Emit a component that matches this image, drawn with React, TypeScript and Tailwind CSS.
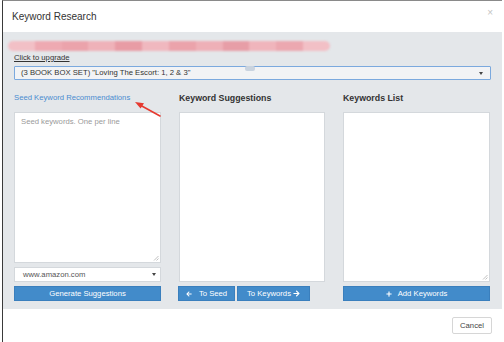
import { FaArrowLeft, FaArrowRight, FaPlus } from "react-icons/fa";

function Caret() {
  return <span className="w-0 h-0 border-x-[2.5px] border-t-[3px] border-x-transparent border-t-[#444]" />;
}

function Grip() {
  return (
    <svg className="absolute right-[1px] bottom-[1px]" width="6" height="6" viewBox="0 0 6 6">
      <path d="M5.5 1L1 5.5M5.5 3.5L3.5 5.5" stroke="#b0b0b0" strokeWidth="0.8" />
    </svg>
  );
}

// blurred redaction strip over the account line
function Redacted() {
  const shades = ["#f2c0c6", "#eeaab2", "#eba3ab", "#efb2b9", "#e89ca5", "#f0b8bf", "#eba3ab", "#eeb0b7", "#e79ea7", "#f0b5bc", "#eca8b0", "#f2c0c6"];
  return (
    <div className="ml-[-6px] mt-[8px] h-[12px] w-[322px] flex items-center">
      <div className="w-full h-[10px] rounded-full overflow-hidden flex blur-[1px]">
        {shades.map((c, i) => (
          <div key={i} className="flex-1 h-full" style={{ background: c }} />
        ))}
      </div>
    </div>
  );
}

export default function App() {
  return (
    <div className="w-[504px] h-[342px] bg-white overflow-hidden font-['Liberation_Sans',Arial,sans-serif]">
      <div className="relative ml-[2px] w-[500px] h-full border-l border-l-[#3a3a3a] border-t border-t-[#8a8a8a] flex flex-col">
        {/* header */}
        <div className="h-[31px] flex items-center justify-between pl-[9px] pr-[9px]">
          <span className="text-[10px] text-[#333]">Keyword Research</span>
          <span className="text-[10px] leading-none text-[#c4c4c4] -mt-[8px]">×</span>
        </div>

        {/* body */}
        <div className="relative h-[277px] bg-[#e4e7ea] pl-[11px] pr-[11px] flex flex-col">
          <Redacted />
          <div className="h-[12px] leading-[12px] text-[7.7px] text-[#333] underline">Click to upgrade</div>
          <div className="mt-[2px] h-[14px] border border-[#7ba9de] bg-[#f2f3f5] rounded-[1px] flex items-center justify-between pl-[6px] pr-[7px]">
            <span className="text-[7.7px] text-[#333]">(3 BOOK BOX SET) "Loving The Escort: 1, 2 &amp; 3"</span>
            <Caret />
          </div>
          <div className="absolute left-[242px] top-[34px] w-[10px] h-[5px] rounded-[2px] bg-[#c9d3df]" />

          <div className="mt-[11px] grid grid-cols-[147px_146px_147px] gap-x-[18px]">
            {/* seed column */}
            <div className="flex flex-col">
              <div className="h-[14px] leading-[14px] text-[7.7px] text-[#4a8cd0]">Seed Keyword Recommendations</div>
              <div className="relative mt-[7px] h-[151px] bg-white border border-[#d4d8dc]">
                <div className="pl-[6px] pt-[3px] text-[7.7px] text-[#9a9a9a]">Seed keywords. One per line</div>
                <Grip />
              </div>
              <div className="mt-[4px] h-[15px] bg-white border border-[#d4d8dc] flex items-center justify-between pl-[8px] pr-[4px]">
                <span className="text-[7.7px] text-[#555]">www.amazon.com</span>
                <Caret />
              </div>
              <div className="mt-[4px] h-[15px] bg-[#428bca] border border-[#3a7fbd] flex items-center justify-center text-[7.7px] text-white">
                Generate Suggestions
              </div>
            </div>

            {/* suggestions column */}
            <div className="flex flex-col">
              <div className="h-[14px] leading-[14px] text-[8.8px] font-bold text-[#333]">Keyword Suggestions</div>
              <div className="mt-[7px] h-[170px] bg-white border border-[#d4d8dc]" />
              <div className="mt-[4px] flex gap-[2px] -ml-[1px]">
                <div className="w-[57px] h-[15px] bg-[#428bca] border border-[#3a7fbd] flex items-center justify-center gap-[7px] text-[7.7px] text-white">
                  <FaArrowLeft className="w-[6px] h-[6px]" />
                  <span>To Seed</span>
                </div>
                <div className="w-[73px] h-[15px] bg-[#428bca] border border-[#3a7fbd] flex items-center justify-center gap-[2px] text-[7.7px] text-white">
                  <span>To Keywords</span>
                  <FaArrowRight className="w-[7px] h-[7px]" />
                </div>
              </div>
            </div>

            {/* keywords list column */}
            <div className="flex flex-col">
              <div className="h-[14px] leading-[14px] text-[8.8px] font-bold text-[#333]">Keywords List</div>
              <div className="relative mt-[7px] h-[170px] bg-white border border-[#d4d8dc]">
                <Grip />
              </div>
              <div className="mt-[4px] h-[15px] bg-[#428bca] border border-[#3a7fbd] flex items-center justify-center gap-[6px] text-[7.7px] text-white">
                <FaPlus className="w-[6px] h-[6px]" />
                <span>Add Keywords</span>
              </div>
            </div>
          </div>

          {/* red annotation arrow */}
          <svg className="absolute left-[128px] top-[66px]" width="34" height="22" viewBox="0 0 34 22">
            <path d="M29 18L9 7" stroke="#e63a30" strokeWidth="1.6" strokeLinecap="round" />
            <path d="M4 4L13 5.2L9.6 10.6Z" fill="#e63a30" />
          </svg>
        </div>

        {/* footer */}
        <div className="flex-1 flex justify-end items-start pt-[8px] pr-[10px]">
          <div className="w-[40px] h-[17px] bg-white border border-[#d6d6d6] rounded-[2px] flex items-center justify-center text-[7.7px] text-[#444]">
            Cancel
          </div>
        </div>
      </div>
    </div>
  );
}
